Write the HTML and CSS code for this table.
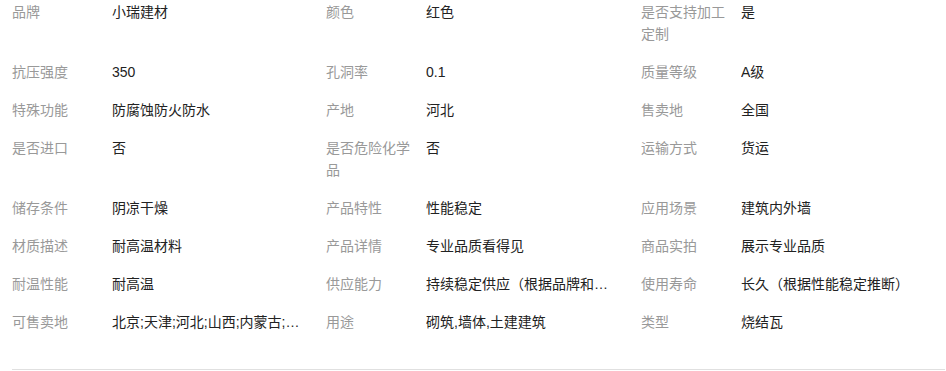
FILE: index.html
```html
<!DOCTYPE html>
<html lang="zh">
<head>
<meta charset="utf-8">
<link rel="stylesheet" href="styles.css">
</head>
<body>
<div class="attrs">
  <div class="item"><div class="label">品牌</div><div class="value">小瑞建材</div></div>
  <div class="item"><div class="label">颜色</div><div class="value">红色</div></div>
  <div class="item"><div class="label">是否支持加工定制</div><div class="value">是</div></div>

  <div class="item"><div class="label">抗压强度</div><div class="value">350</div></div>
  <div class="item"><div class="label">孔洞率</div><div class="value">0.1</div></div>
  <div class="item"><div class="label">质量等级</div><div class="value">A级</div></div>

  <div class="item"><div class="label">特殊功能</div><div class="value">防腐蚀防火防水</div></div>
  <div class="item"><div class="label">产地</div><div class="value">河北</div></div>
  <div class="item"><div class="label">售卖地</div><div class="value">全国</div></div>

  <div class="item"><div class="label">是否进口</div><div class="value">否</div></div>
  <div class="item"><div class="label">是否危险化学品</div><div class="value">否</div></div>
  <div class="item"><div class="label">运输方式</div><div class="value">货运</div></div>

  <div class="item"><div class="label">储存条件</div><div class="value">阴凉干燥</div></div>
  <div class="item"><div class="label">产品特性</div><div class="value">性能稳定</div></div>
  <div class="item"><div class="label">应用场景</div><div class="value">建筑内外墙</div></div>

  <div class="item"><div class="label">材质描述</div><div class="value">耐高温材料</div></div>
  <div class="item"><div class="label">产品详情</div><div class="value">专业品质看得见</div></div>
  <div class="item"><div class="label">商品实拍</div><div class="value">展示专业品质</div></div>

  <div class="item"><div class="label">耐温性能</div><div class="value">耐高温</div></div>
  <div class="item"><div class="label">供应能力</div><div class="value">持续稳定供应（根据品牌和产地推断）</div></div>
  <div class="item"><div class="label">使用寿命</div><div class="value">长久（根据性能稳定推断）</div></div>

  <div class="item"><div class="label">可售卖地</div><div class="value">北京;天津;河北;山西;内蒙古;辽宁;吉林;黑龙江;上海</div></div>
  <div class="item"><div class="label">用途</div><div class="value">砌筑,墙体,土建建筑</div></div>
  <div class="item"><div class="label">类型</div><div class="value">烧结瓦</div></div>
</div>
</body>
</html>
```
FILE: styles.css
```css
html, body {
  margin: 0;
  padding: 0;
  background: #fff;
}
body {
  font-family: "Liberation Sans", "Noto Sans CJK SC", sans-serif;
  font-size: 14px;
  line-height: 22px;
}
.attrs {
  margin-left: 12px;
  margin-right: 1px;
  padding-top: 1px;
  padding-bottom: 36px;
  border-bottom: 1px solid #e0e0e0;
  display: grid;
  grid-template-columns: 314px 315px 1fr;
  row-gap: 16px;
}
.item {
  display: flex;
  min-width: 0;
}
.label {
  width: 92px;
  flex: none;
  margin-right: 8px;
  color: #999;
}
.value {
  width: 190px;
  color: #222;
  white-space: nowrap;
  overflow: hidden;
  text-overflow: ellipsis;
}
```
